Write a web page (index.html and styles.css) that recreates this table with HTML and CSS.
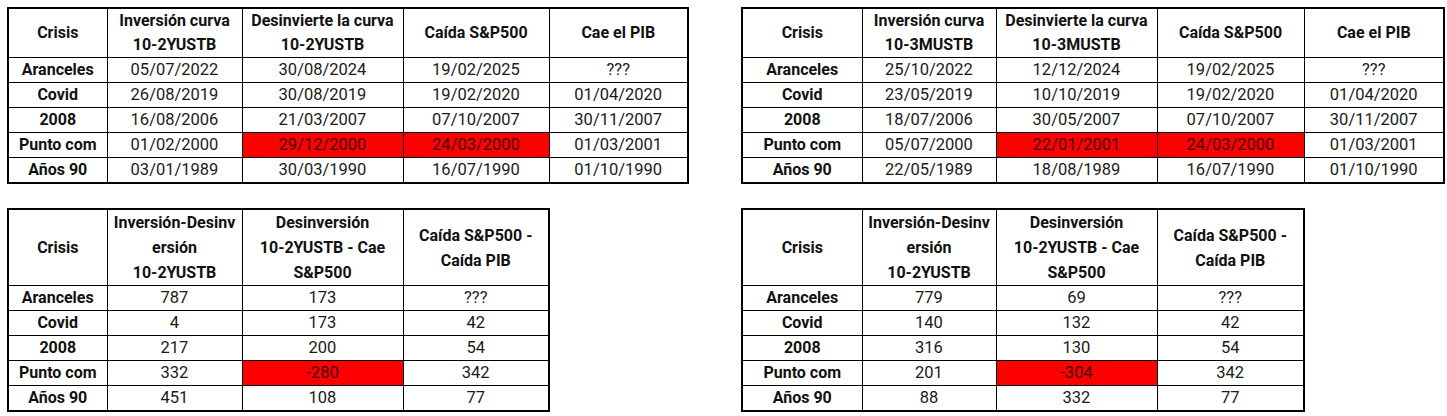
FILE: index.html
```html
<!DOCTYPE html>
<html lang="es">
<head>
<meta charset="utf-8">
<title>Curva de tipos y crisis</title>
<link rel="stylesheet" href="styles.css">
</head>
<body>
<div class="grid">
  <table class="tbl t-a">
    <colgroup><col class="c1"><col class="c2"><col class="c3"><col class="c4"><col class="c5"></colgroup>
    <thead>
      <tr class="h2"><th>Crisis</th><th>Inversión curva<br>10-2YUSTB</th><th>Desinvierte la curva<br>10-2YUSTB</th><th>Caída S&amp;P500</th><th>Cae el PIB</th></tr>
    </thead>
    <tbody>
      <tr><th>Aranceles</th><td>05/07/2022</td><td>30/08/2024</td><td>19/02/2025</td><td>???</td></tr>
      <tr><th>Covid</th><td>26/08/2019</td><td>30/08/2019</td><td>19/02/2020</td><td>01/04/2020</td></tr>
      <tr><th>2008</th><td>16/08/2006</td><td>21/03/2007</td><td>07/10/2007</td><td>30/11/2007</td></tr>
      <tr><th>Punto com</th><td>01/02/2000</td><td class="red">29/12/2000</td><td class="red">24/03/2000</td><td>01/03/2001</td></tr>
      <tr><th>Años 90</th><td>03/01/1989</td><td>30/03/1990</td><td>16/07/1990</td><td>01/10/1990</td></tr>
    </tbody>
  </table>

  <table class="tbl t-b">
    <colgroup><col class="c1"><col class="c2"><col class="c3"><col class="c4"><col class="c5"></colgroup>
    <thead>
      <tr class="h2"><th>Crisis</th><th>Inversión curva<br>10-3MUSTB</th><th>Desinvierte la curva<br>10-3MUSTB</th><th>Caída S&amp;P500</th><th>Cae el PIB</th></tr>
    </thead>
    <tbody>
      <tr><th>Aranceles</th><td>25/10/2022</td><td>12/12/2024</td><td>19/02/2025</td><td>???</td></tr>
      <tr><th>Covid</th><td>23/05/2019</td><td>10/10/2019</td><td>19/02/2020</td><td>01/04/2020</td></tr>
      <tr><th>2008</th><td>18/07/2006</td><td>30/05/2007</td><td>07/10/2007</td><td>30/11/2007</td></tr>
      <tr><th>Punto com</th><td>05/07/2000</td><td class="red">22/01/2001</td><td class="red">24/03/2000</td><td>01/03/2001</td></tr>
      <tr><th>Años 90</th><td>22/05/1989</td><td>18/08/1989</td><td>16/07/1990</td><td>01/10/1990</td></tr>
    </tbody>
  </table>

  <table class="tbl t-c">
    <colgroup><col class="c1"><col class="c2"><col class="c3"><col class="c4"></colgroup>
    <thead>
      <tr class="h3"><th>Crisis</th><th>Inversión-Desinv<br>ersión<br>10-2YUSTB</th><th>Desinversión<br>10-2YUSTB - Cae<br>S&amp;P500</th><th>Caída S&amp;P500 -<br>Caída PIB</th></tr>
    </thead>
    <tbody>
      <tr><th>Aranceles</th><td>787</td><td>173</td><td>???</td></tr>
      <tr><th>Covid</th><td>4</td><td>173</td><td>42</td></tr>
      <tr><th>2008</th><td>217</td><td>200</td><td>54</td></tr>
      <tr><th>Punto com</th><td>332</td><td class="red">-280</td><td>342</td></tr>
      <tr><th>Años 90</th><td>451</td><td>108</td><td>77</td></tr>
    </tbody>
  </table>

  <table class="tbl t-d">
    <colgroup><col class="c1"><col class="c2"><col class="c3"><col class="c4"></colgroup>
    <thead>
      <tr class="h3"><th>Crisis</th><th>Inversión-Desinv<br>ersión<br>10-2YUSTB</th><th>Desinversión<br>10-2YUSTB - Cae<br>S&amp;P500</th><th>Caída S&amp;P500 -<br>Caída PIB</th></tr>
    </thead>
    <tbody>
      <tr><th>Aranceles</th><td>779</td><td>69</td><td>???</td></tr>
      <tr><th>Covid</th><td>140</td><td>132</td><td>42</td></tr>
      <tr><th>2008</th><td>316</td><td>130</td><td>54</td></tr>
      <tr><th>Punto com</th><td>201</td><td class="red">-304</td><td>342</td></tr>
      <tr><th>Años 90</th><td>88</td><td>332</td><td>77</td></tr>
    </tbody>
  </table>
</div>
</body>
</html>
```

FILE: styles.css
```css
html, body {
  margin: 0;
  padding: 0;
  background: #ffffff;
}

body {
  font-family: Roboto, "Liberation Sans", Arial, sans-serif;
  color: #1c1c1c;
}

.grid {
  display: grid;
  grid-template-columns: 680px 702px;
  column-gap: 54px;
  row-gap: 24px;
  padding: 7px 0 0 7px;
  align-items: start;
}

.tbl {
  border-collapse: collapse;
  table-layout: fixed;
  border: 2px solid #000;
}

.t-a { width: 680px; }
.t-b { width: 702px; }
.t-c { width: 541px; }
.t-d { width: 563px; }

.t-a .c1, .t-c .c1 { width: 99px; }
.t-a .c2, .t-c .c2 { width: 135px; }
.t-a .c3, .t-c .c3 { width: 161px; }
.t-a .c4, .t-c .c4 { width: 146px; }
.t-a .c5 { width: 139px; }

.t-b .c1, .t-d .c1 { width: 120px; }
.t-b .c2, .t-d .c2 { width: 134px; }
.t-b .c3, .t-d .c3 { width: 161px; }
.t-b .c4, .t-d .c4 { width: 147px; }
.t-b .c5 { width: 140px; }

.tbl th,
.tbl td {
  border: 1px solid #000;
  padding: 0;
  text-align: center;
  vertical-align: middle;
  font-size: 16px;
  line-height: 24px;
  height: 24px;
  white-space: nowrap;
  overflow: hidden;
}

.tbl th {
  font-weight: 700;
  color: #111;
}

.tbl td {
  font-weight: 400;
  color: #1a1a1a;
  font-size: 16.5px;
}

.h2 th { height: 47px; }

.h3 th {
  height: 75px;
  line-height: 25px;
}

.tbl td.red {
  background: #ff0000;
  color: #3a0000;
}
```
